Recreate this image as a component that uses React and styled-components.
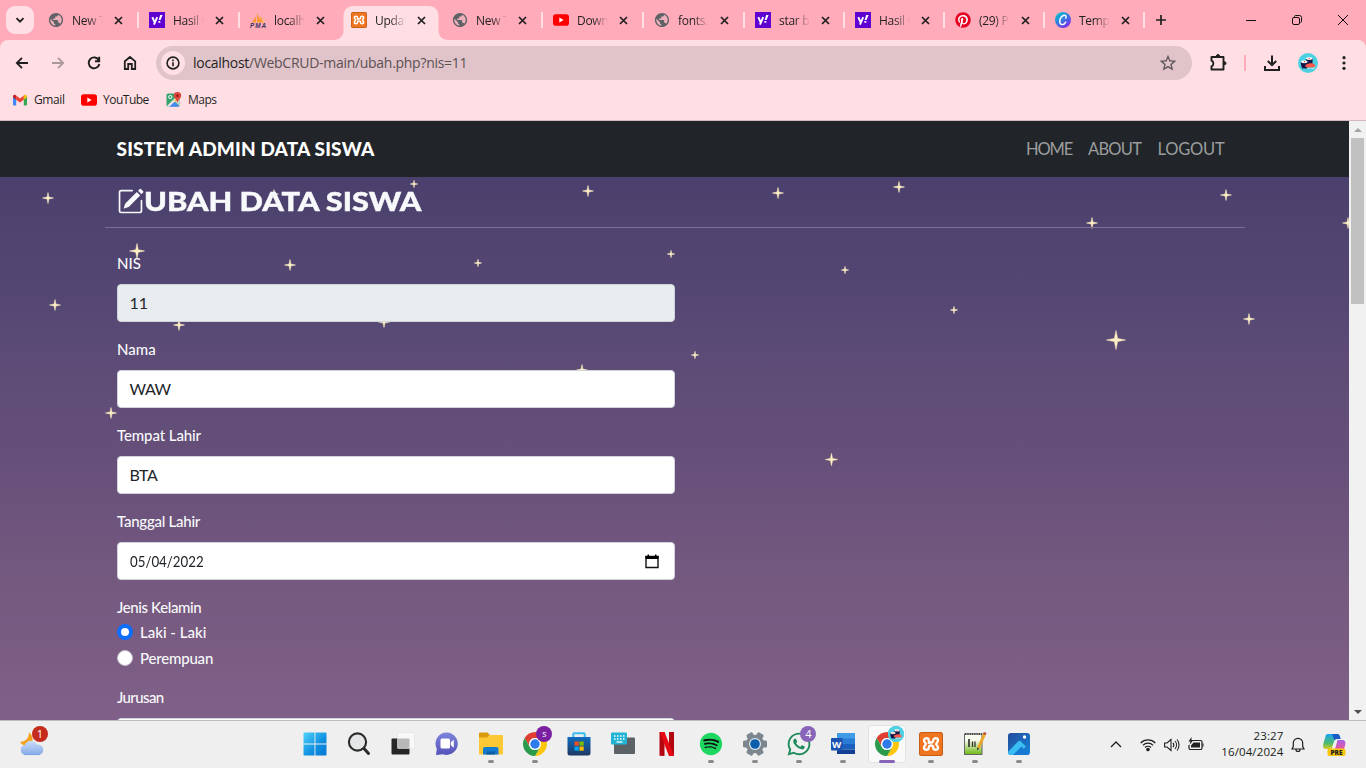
import React from "react";
import styled, { createGlobalStyle } from "styled-components";
import { BsPencilSquare } from "react-icons/bs";
import { MdPublic, MdStarBorder } from "react-icons/md";
import { FaPinterest, FaSpotify, FaWhatsapp } from "react-icons/fa";

const Global = createGlobalStyle`
  * { box-sizing: border-box; }
  body { margin: 0; overflow: hidden; }
  svg { display: block; flex: none; overflow: visible; }
`;

const Screen = styled.div`
  width: 1366px;
  height: 768px;
  display: flex;
  flex-direction: column;
  overflow: hidden;
  background: #ffabba;
  font-family: "Open Sans", "Noto Sans", sans-serif;
  color: #1f1f1f;
`;

/* ---------- tab strip ---------- */
const TabStrip = styled.div`
  height: 40px;
  flex: none;
  display: flex;
  align-items: stretch;
  padding-left: 6px;
`;
const TabSearch = styled.div`
  width: 28px;
  height: 28px;
  margin: 6px 4px 0 0;
  border-radius: 9px;
  background: #ffdfe4;
  display: grid;
  place-items: center;
`;
const TabBox = styled.div`
  width: ${(p) => p.$w}px;
  flex: none;
  padding: 0 0 0 10px;
  display: flex;
  align-items: center;
  position: relative;
`;
const TabShape = styled.svg`
  position: absolute;
  left: -5px;
  top: 6px;
`;
const Fav = styled.div`
  width: 16px;
  height: 16px;
  position: relative;
`;
const TabTitle = styled.div`
  width: 31px;
  margin-left: 8px;
  padding-top: 1px;
  white-space: nowrap;
  font-size: 12px;
  line-height: 16px;
  letter-spacing: ${(p) => p.$ls || -0.3}px;
  position: relative;
  mask-image: linear-gradient(90deg, #000 50%, transparent);
`;
const TabClose = styled.div`
  position: relative;
  margin-left: 11px;
`;
const Divider = styled.div`
  width: 2px;
  height: 16px;
  margin-left: auto;
  background: ${(p) => (p.$hidden ? "transparent" : "#ffdfe4")};
`;
const NewTab = styled.div`
  width: 32px;
  display: grid;
  place-items: center;
`;
const WindowButtons = styled.div`
  margin-left: auto;
  display: flex;
  > div {
    width: 46px;
    display: grid;
    place-items: center;
  }
`;

/* ---------- toolbar ---------- */
const Chrome = styled.div`
  height: 81px;
  flex: none;
  background: #ffdfe4;
  border-radius: 8px 8px 0 0;
  border-bottom: 1px solid #d3b8bd;
`;
const Toolbar = styled.div`
  height: 46px;
  display: flex;
  align-items: center;
  padding-left: 4px;
`;
const ToolButton = styled.div`
  width: 36px;
  height: 36px;
  display: grid;
  place-items: center;
`;
const AddressBar = styled.div`
  width: 1036px;
  height: 34px;
  margin: 0 8px;
  padding: 0 14px 0 5px;
  border-radius: 17px;
  background: #e0c4c9;
  display: flex;
  align-items: center;
`;
const InfoChip = styled.div`
  width: 24px;
  height: 24px;
  border-radius: 50%;
  background: #ffdfe4;
  display: grid;
  place-items: center;
`;
const Url = styled.div`
  margin-left: 8px;
  padding-bottom: 1px;
  flex: 1;
  font-size: 14px;
  letter-spacing: -0.29px;
  color: #5c5154;
  span { color: #1f1f1f; }
`;
const ToolDivider = styled.div`
  width: 2px;
  height: 16px;
  margin: 0 8px;
  background: #ffabba;
`;
const Bookmarks = styled.div`
  display: flex;
  align-items: center;
  height: 27px;
  padding-left: 12px;
`;
const Bookmark = styled.div`
  display: flex;
  align-items: center;
  gap: 6px;
  width: ${(p) => p.$w}px;
  font-size: 12px;
  letter-spacing: ${(p) => p.$ls || 0}px;
`;

/* ---------- web page ---------- */
const Viewport = styled.div`
  height: 599px;
  flex: none;
  display: flex;
  overflow: hidden;
`;
const Page = styled.div`
  width: 1349px;
  height: 599px;
  display: flex;
  flex-direction: column;
  font-family: Lato, "Gill Sans MT", sans-serif;
`;
const Navbar = styled.div`
  height: 56px;
  flex: none;
  background: #212529;
  padding: 0 124px 2px 116.5px;
  display: flex;
  justify-content: space-between;
  align-items: center;
`;
const Brand = styled.div`
  font-family: Lato, sans-serif;
  font-weight: 900;
  font-size: 19px;
  color: #fff;
  white-space: nowrap;
  letter-spacing: 0.16px;
`;
const NavLinks = styled.div`
  display: flex;
  gap: 16px;
  padding-top: 2px;
`;
const NavLink = styled.div`
  width: ${(p) => p.$w}px;
  white-space: nowrap;
  font-size: 16.5px;
  letter-spacing: ${(p) => p.$ls}px;
  color: #9b9d9e;
`;
const Night = styled.div`
  flex: 1;
  position: relative;
  overflow: hidden;
  background: linear-gradient(#4b406d 0%, #584975 29%, #5c4b76 32%, #67507a 54%, #75597f 75%, #806088 100%);
`;
const Sky = styled.svg`
  position: absolute;
  left: 0;
  top: 0;
`;
const Container = styled.div`
  position: relative;
  width: 1140px;
  margin-left: 105px;
`;
const Heading = styled.h3`
  margin: 0;
  height: 50px;
  padding: 0 0 2px 12px;
  display: flex;
  align-items: center;
  color: #f8f9fa;
  font-size: 27px;
  font-weight: 900;
  white-space: nowrap;
`;
const HeadingText = styled.span`
  padding-bottom: 1px;
  transform: scaleX(1.14);
  transform-origin: left;
  letter-spacing: -0.03px;
  -webkit-text-stroke: 0.4px #f8f9fa;
`;
const Rule = styled.div`
  height: 1px;
  background: #7b6f93;
  margin-bottom: 24px;
`;
const Form = styled.div`
  width: 570px;
  padding-left: 12px;
`;
const Group = styled.div`
  margin-bottom: 16px;
`;
const Label = styled.div`
  height: 24px;
  line-height: 23px;
  font-size: 15px;
  font-weight: 500;
  color: #f8f9fa;
  margin-bottom: ${(p) => (p.$tight ? 0 : 8)}px;
  letter-spacing: ${(p) => p.$ls || 0}px;
  white-space: nowrap;
`;
const Control = styled.div`
  height: 38px;
  padding: 0 15px 0 11.5px;
  border: 1px solid #ced4da;
  border-radius: 4px;
  background: ${(p) => (p.$readonly ? "#e9ecef" : "#fff")};
  color: #212529;
  font-size: 16px;
  display: flex;
  align-items: center;
  justify-content: space-between;
  letter-spacing: ${(p) => p.$ls || 0}px;
  span { padding-bottom: 2px; }
`;
const DateText = styled.span`
  transform: scaleX(0.83);
  transform-origin: left;
`;
const Check = styled.div`
  height: 24px;
  margin-bottom: 2px;
  display: flex;
  align-items: center;
  gap: 7px;
  color: #f8f9fa;
  font-size: 15px;
  font-weight: 500;
  letter-spacing: ${(p) => p.$ls || 0}px;
  span { padding-bottom: 1px; }
`;
const Radio = styled.div`
  width: 16px;
  height: 16px;
  border-radius: 50%;
  background: #fff;
  border: ${(p) => (p.$on ? "4.5px solid #0d6efd" : "1px solid #c3bec9")};
`;
const Scrollbar = styled.div`
  width: 17px;
  background: #f1f1f1;
  display: flex;
  flex-direction: column;
  align-items: center;
  justify-content: space-between;
`;
const ScrollTop = styled.div`
  display: flex;
  flex-direction: column;
  align-items: center;
`;
const Arrow = styled.div`
  width: 17px;
  height: 17px;
  display: grid;
  place-items: center;
`;
const Thumb = styled.div`
  width: 13px;
  height: 166px;
  background: #c1c1c1;
`;

/* ---------- taskbar ---------- */
const Taskbar = styled.div`
  height: 48px;
  flex: none;
  background: #eeefee;
  border-top: 1px solid #bdbdbd;
  display: flex;
  align-items: center;
`;
const Weather = styled.div`
  width: 293.4px;
  padding: 0 0 1px 19px;
`;
const TaskItem = styled.div`
  width: 44px;
  height: 47px;
  display: flex;
  flex-direction: column;
  align-items: center;
  padding-top: 11px;
  position: relative;
`;
const ActiveTile = styled.div`
  position: absolute;
  left: 3px;
  top: 4px;
  width: 38px;
  height: 38px;
  border-radius: 4px;
  background: #f9f9f9;
  border: 1px solid #e3e3e3;
`;
const TaskIcon = styled.div`
  position: relative;
  width: 24px;
  height: 24px;
  display: grid;
  place-content: center;
`;
const Indicator = styled.div`
  position: relative;
  margin-top: 4px;
  width: ${(p) => (p.$active ? 16 : 6)}px;
  height: 3px;
  border-radius: 2px;
  background: ${(p) => (p.$active ? "#8764b8" : "#8b8b8b")};
`;
const Badge = styled.div`
  position: absolute;
  right: -5px;
  top: -6px;
  width: 16px;
  height: 16px;
  border-radius: 50%;
  background: ${(p) => p.$bg};
  color: #fff;
  font-size: ${(p) => p.$fs || 11}px;
  line-height: 16px;
  text-align: center;
`;
const Tray = styled.div`
  margin-left: auto;
  padding-right: 10.5px;
  display: flex;
  align-items: center;
  height: 47px;
`;
const TraySlot = styled.div`
  width: ${(p) => p.$w}px;
  display: grid;
  place-items: center;
`;
const Clock = styled.div`
  width: 72px;
  text-align: right;
  font-size: 11.5px;
  line-height: 16px;
  letter-spacing: 0.12px;
  padding-bottom: 2px;
  white-space: nowrap;
  color: #1b1b1b;
`;

/* ---------- icons ---------- */
const Stroke = ({ d, s = 16, w = 1.8, c = "#1f1f1f", children }) => (
  <svg width={s} height={s} viewBox={`0 0 ${s} ${s}`} fill="none" stroke={c} strokeWidth={w}>
    {d && <path d={d} />}
    {children}
  </svg>
);

const Globe = () => (
  <svg width="16" height="16" viewBox="0 0 16 16">
    <circle cx="8" cy="8" r="5.5" fill="#eeb0bb" />
    <MdPublic x="-0.5" y="-0.5" size={17} color="#5f6368" />
  </svg>
);
const Yahoo = () => (
  <svg width="16" height="16" viewBox="0 0 16 16">
    <rect width="16" height="16" fill="#5f01d1" />
    <path d="M3.3 5.2L5.5 10M8.2 5.2L5 12.6" stroke="#fff" strokeWidth="1.9" fill="none" />
    <path d="M11.2 3h2.4l-2 5h-2zM9.4 9h1.9v1.7H9.4z" fill="#fff" />
  </svg>
);
const Pma = () => (
  <svg width="16" height="16" viewBox="0 0 16 16">
    <path d="M1.500 10.500L6 4.500v6zM7 10.500V1l3.500 7V4l4.500 6.500z" fill="#f99b35" />
    <path d="M11 5l4 5.500h-2z" fill="#fbc58c" />
    <text x="0" y="15.500" fontFamily="Liberation Sans" fontWeight="700" fontStyle="italic" fontSize="6.300" fill="#343660" textLength="16">PMA</text>
  </svg>
);
const Xampp = ({ s = 16 }) => (
  <svg width={s} height={s} viewBox="0 0 24 24">
    <rect width="24" height="24" rx="2.500" fill="#c65c15" />
    <rect x="1" y="1" width="22" height="22" rx="2" fill="#ef7521" />
    <path
      d="M9.800 12V8.500C9.800 5.500 5 5.500 5 8.500C5 10.300 6.800 10.600 6.800 12C6.800 13.400 5 13.700 5 15.500C5 18.500 9.800 18.500 9.800 15.500C9.800 14.300 10.500 13.500 12 13.500C13.500 13.500 14.200 14.300 14.200 15.500C14.200 18.500 19 18.500 19 15.500C19 13.700 17.200 13.400 17.200 12C17.200 10.600 19 10.300 19 8.500C19 5.500 14.200 5.500 14.200 8.500C14.200 9.700 13.500 10.500 12 10.500C10.500 10.500 9.800 9.700 9.800 8.500"
      fill="none" stroke="#fff" strokeWidth="2.300" strokeLinejoin="round"
    />
  </svg>
);
const YouTube = () => (
  <svg width="16" height="16" viewBox="0 0 16 16">
    <rect y="2.300" width="16" height="11.400" rx="2.800" fill="#f00" />
    <path d="M6.300 5.600v4.800L10.600 8z" fill="#fff" />
  </svg>
);
const Pinterest = () => (
  <svg width="16" height="16" viewBox="0 0 16 16">
    <circle cx="8" cy="8" r="7" fill="#fff" />
    <FaPinterest size={16} color="#e60023" />
  </svg>
);
const Canva = () => (
  <svg width="16" height="16" viewBox="0 0 16 16">
    <defs>
      <linearGradient id="canva" x1="0" y1="0" x2="0.7" y2="1">
        <stop offset="0.1" stopColor="#00c4cc" />
        <stop offset="0.6" stopColor="#3f6fe0" />
        <stop offset="1" stopColor="#7d2ae8" />
      </linearGradient>
    </defs>
    <circle cx="8" cy="8" r="8" fill="url(#canva)" />
    <path d="M10.800 6.200c.6-1.200.3-2.900-1.300-2.900C7 3.300 4.700 6.400 4.700 9.300c0 2 1 3.300 2.600 3.300 1.600 0 2.800-1.100 3.500-2.400" fill="none" stroke="#fff" strokeWidth="1.400" strokeLinecap="round" />
  </svg>
);
const Gmail = () => (
  <svg width="16" height="16" viewBox="0 0 16 16">
    <path d="M1 4.500l3.200 2.400v6.600H2a1 1 0 0 1-1-1z" fill="#4285f4" />
    <path d="M15 4.500l-3.200 2.400v6.600H14a1 1 0 0 0 1-1z" fill="#34a853" />
    <path d="M4.200 3.600L8 6.500l3.800-2.900v4.100L8 10.500 4.200 7.700z" fill="#ea4335" />
    <path d="M1 4.600c0-1.700 1.700-2.200 2.700-1.400l.5.4v4.100L1 5.300z" fill="#c5221f" />
    <path d="M15 4.600c0-1.700-1.700-2.200-2.700-1.400l-.5.4v4.100L15 5.300z" fill="#fbbc04" />
  </svg>
);
const Maps = () => (
  <svg width="16" height="16" viewBox="0 0 16 16">
    <rect x="0.500" y="1.500" width="13" height="13" rx="1.500" fill="#34a26b" />
    <path d="M2 14.500l5.500-5.500 6 5.500z" fill="#4a89f3" />
    <path d="M1 14L9 6l3 1-7.500 7.500H1.500z" fill="#f2e9e2" />
    <path d="M3.500 14.500L8 10l4.500 4.500z" fill="#4a89f3" />
    <path d="M9 9.500l4.500 4.500V8l-1.500-1z" fill="#cdd4d8" />
    <path d="M7.500 9.500l2-2.300L11 9z" fill="#fbc02d" />
    <circle cx="4.300" cy="5" r="1.600" fill="none" stroke="#fff" strokeWidth="1" />
    <path d="M11.500 0a3.700 3.700 0 0 1 3.700 3.700c0 2.500-2.700 3.300-3.700 7-1-3.700-3.700-4.500-3.700-7A3.700 3.700 0 0 1 11.500 0z" fill="#e2453a" />
    <circle cx="11.500" cy="3.700" r="1.300" fill="#8d1c18" />
  </svg>
);
const Sushi = ({ s = 20 }) => (
  <svg width={s} height={s} viewBox="0 0 20 20">
    <circle cx="10" cy="10" r="10" fill="#4dd0e1" />
    <path d="M8 5.500h6.500v6H8zM2.800 8.500h7v7H4.500c-1.200-1-1.700-4-1.700-7z" fill="#171747" />
    <ellipse cx="11.200" cy="5.600" rx="3.200" ry="1.400" fill="#fff" />
    <ellipse cx="6.300" cy="8.800" rx="3.300" ry="1.400" fill="#fff" />
    <circle cx="11.300" cy="5.600" r=".7" fill="#f44336" />
    <circle cx="6.500" cy="8.800" r=".7" fill="#f44336" />
    <path d="M8.200 14.600c3.500.8 7 .9 8.800-.6l-1 1.500H9z" fill="#fff" />
    <path d="M7 13c1.500-3.300 7.700-3.500 9.700-1.400.8 1.200.5 2.200-.4 2.500-2.500.8-7.700.5-9.300-1.100z" fill="#ff5a4a" />
  </svg>
);
const ChromeLogo = () => (
  <svg width="24" height="24" viewBox="0 0 24 24">
    <path d="M1.610 6A12 12 0 0 1 22.390 6H12A6 6 0 0 0 6.800 15Z" fill="#df3e32" />
    <path d="M22.390 6A12 12 0 0 1 12 24L17.200 15A6 6 0 0 0 12 6Z" fill="#fdc60b" />
    <path d="M12 24A12 12 0 0 1 1.610 6L6.800 15A6 6 0 0 0 17.200 15Z" fill="#299b4b" />
    <circle cx="12" cy="12" r="6" fill="#fff" />
    <circle cx="12" cy="12" r="4.700" fill="#2f7bea" />
  </svg>
);
const WeatherIcon = () => (
  <svg width="26" height="27" viewBox="0 2 26 27">
    <defs>
      <linearGradient id="cloud" x1="0" y1="0" x2="0" y2="1">
        <stop offset="0" stopColor="#c9ddf8" />
        <stop offset="1" stopColor="#85a9e8" />
      </linearGradient>
    </defs>
    <path d="M11 3.500c4 2.500 5 8.500 1.500 12-3 2-8 1.500-10.500-2.500 5 0 9-3.500 9-9.500z" fill="#f5a11c" />
    <path d="M7.500 26a5 5 0 0 1-.7-9.900 6.500 6.500 0 0 1 12-.6A5.300 5.300 0 0 1 21 26z" fill="url(#cloud)" />
    <path d="M6 25.600h16" stroke="#7d9fe2" strokeWidth="0.800" />
  </svg>
);
const Start = () => (
  <svg width="24" height="24" viewBox="0 0 24 24">
    <defs>
      <linearGradient id="win" x1="0" y1="0" x2="1" y2="1">
        <stop offset="0" stopColor="#50d2fa" />
        <stop offset="0.600" stopColor="#0f8fe0" />
        <stop offset="1" stopColor="#0876d2" />
      </linearGradient>
    </defs>
    <path d="M0.500 1.500a1 1 0 0 1 1-1H11.500V11.600H.5zM12.400.5H22.500a1 1 0 0 1 1 1V11.600H12.400zM.5 12.500H11.500V23.500H1.500a1 1 0 0 1-1-1zM12.400 12.500H23.500V22.500a1 1 0 0 1-1 1H12.400z" fill="url(#win)" />
  </svg>
);
const Search = () => (
  <svg width="24" height="24" viewBox="0 0 24 24" fill="none" stroke="#2b2b2b">
    <circle cx="10.500" cy="10" r="8.600" strokeWidth="2.100" fill="#e4e6e8" />
    <path d="M17 16.500l4.500 5" strokeWidth="3" strokeLinecap="round" />
  </svg>
);
const TaskView = () => (
  <svg width="24" height="24" viewBox="0 0 24 24">
    <rect x="0.500" y="6.500" width="18" height="16" rx="1" fill="#262626" />
    <rect x="6.500" y="0.500" width="17" height="16" rx="1" fill="#f8f8f8" stroke="#ddd" strokeWidth=".5" />
    <rect x="6.500" y="6.500" width="12" height="10" fill="#b9b9b9" />
  </svg>
);
const Chat = () => (
  <svg width="24" height="24" viewBox="0 0 24 24">
    <defs>
      <linearGradient id="chat" x1="0" y1="0" x2="0" y2="1">
        <stop offset="0" stopColor="#7d85dc" />
        <stop offset="1" stopColor="#5651b8" />
      </linearGradient>
    </defs>
    <path d="M12 .5a11.200 11.200 0 1 1-4 21.800L1 23l.8-6A11.200 11.200 0 0 1 12 .5z" fill="url(#chat)" />
    <rect x="5.500" y="6.500" width="9.500" height="10" rx="1.500" fill="#fff" />
    <path d="M15.800 10.300l3-2.500v8l-3-2.500z" fill="#fff" />
  </svg>
);
const Explorer = () => (
  <svg width="24" height="24" viewBox="0 0 24 24">
    <path d="M0 1.500a1 1 0 0 1 1-1h7.500l2.500 2.500-2 3H0z" fill="#d99a0b" />
    <path d="M0 5.500h8l2.500-2.500H23a1 1 0 0 1 1 1v18.500H0z" fill="#fcc934" />
    <path d="M4 17a2 2 0 0 1 2-2h11.500a2 2 0 0 1 2 2v5.500H4z" fill="#137bd0" />
    <path d="M7.500 19.500h8.500v3H7.500z" fill="#0c5ca8" />
  </svg>
);
const Store = () => (
  <svg width="24" height="24" viewBox="0 0 24 24">
    <defs>
      <linearGradient id="store" x1="0" y1="0" x2="0" y2="1">
        <stop offset="0" stopColor="#0f6cbd" />
        <stop offset="1" stopColor="#1f3963" />
      </linearGradient>
    </defs>
    <path d="M6.300 6V2.300a1 1 0 0 1 1-1h9.400a1 1 0 0 1 1 1V6" fill="none" stroke="#38bdf0" strokeWidth="2" />
    <path d="M.5 5h23V21a2.500 2.500 0 0 1-2.500 2.500H3A2.500 2.500 0 0 1 .5 21z" fill="url(#store)" />
    <path d="M7.500 9.500h4.200v4.200H7.500z" fill="#f25022" />
    <path d="M12.500 9.500h4.200v4.200h-4.200z" fill="#7fba00" />
    <path d="M7.500 14.500h4.200v4.200H7.500z" fill="#00a4ef" />
    <path d="M12.500 14.500h4.200v4.200h-4.200z" fill="#ffb900" />
  </svg>
);
const Keyboard = () => (
  <svg width="24" height="24" viewBox="0 0 24 24">
    <rect x="3" y="5.500" width="21" height="16.500" rx="1" fill="#5c6166" />
    <rect x="0" y="0.500" width="16" height="12" rx="1" fill="#22b4d4" />
    <path d="M3 4h11M3 7h11" stroke="#fff" strokeWidth="1.300" strokeDasharray="1.500 1.500" />
    <path d="M5.500 10h6" stroke="#fff" strokeWidth="1.300" />
  </svg>
);
const Netflix = () => (
  <svg width="24" height="24" viewBox="0 0 24 24">
    <path d="M4.500 0h5v24l-5-.3zM14 0h5v23.700l-5 .3z" fill="#b20710" />
    <path d="M4.500 0h5l9.500 23.700-5 .3z" fill="#e50914" />
  </svg>
);
const Spotify = () => (
  <svg width="24" height="24" viewBox="0 0 24 24">
    <circle cx="12" cy="12" r="10" fill="#111" />
    <FaSpotify x="0.500" y="0.500" size={23} color="#1ed760" />
  </svg>
);
const Settings = () => (
  <svg width="24" height="24" viewBox="0 0 24 24">
    {[0, 60, 120].map((a) => (
      <rect key={a} x="8.500" y="0" width="7" height="24" rx="1.500" fill="#7c868f" transform={`rotate(${a + 30} 12 12)`} />
    ))}
    <circle cx="12" cy="12" r="9.200" fill="#7c868f" />
    <circle cx="12" cy="12" r="6" fill="#e2e9ef" />
    <circle cx="12" cy="12" r="4.800" fill="#0d5eaa" />
  </svg>
);
const Word = () => (
  <svg width="24" height="24" viewBox="0 0 24 24">
    <path d="M6 1h18v6H6z" fill="#3f9be8" />
    <path d="M6 6.500h18v6H6z" fill="#2a7bd3" />
    <path d="M6 12h18v5.500H6z" fill="#1b5fbe" />
    <path d="M6 17.500h18V22H6z" fill="#123f94" />
    <rect x="0" y="6" width="11.500" height="12.500" rx="1" fill="#1a52b0" />
    <text x="5.700" y="15.800" textAnchor="middle" fontFamily="Open Sans" fontWeight="700" fontSize="9.500" fill="#fff">W</text>
  </svg>
);
const NotepadPP = () => (
  <svg width="24" height="24" viewBox="0 0 24 24">
    <defs>
      <linearGradient id="npp" x1="0" y1="0" x2="0" y2="1">
        <stop offset="0.300" stopColor="#f7faef" />
        <stop offset="1" stopColor="#6db813" />
      </linearGradient>
    </defs>
    <rect x="1.500" y="2" width="17.500" height="20.500" fill="url(#npp)" stroke="#666" strokeWidth="1" />
    <path d="M2 2h17" stroke="#444" strokeWidth="2" strokeDasharray="1.300 1" />
    <path d="M6 7v8" stroke="#333" strokeWidth="1.700" />
    <path d="M9.500 15V9.500M12 15V9.500" stroke="#333" strokeWidth="1.300" />
    <path d="M21.500 2l-6 14" stroke="#eda728" strokeWidth="3" />
    <path d="M22.200.5l-.9 2" stroke="#b94a34" strokeWidth="3" />
    <path d="M14.200 15.500l-.3 3 2.300-2z" fill="#333" />
  </svg>
);
const Photos = () => (
  <svg width="24" height="24" viewBox="0 0 24 24">
    <defs>
      <linearGradient id="photo" x1="0" y1="0" x2="1" y2="1">
        <stop offset="0" stopColor="#224a9a" />
        <stop offset="1" stopColor="#1786da" />
      </linearGradient>
      <clipPath id="photoClip"><rect x="1" y="1" width="22" height="22" rx="3" /></clipPath>
    </defs>
    <g clipPath="url(#photoClip)">
      <rect x="1" y="1" width="22" height="22" fill="url(#photo)" />
      <path d="M1 20L11 9.500a2 2 0 0 1 3 0L19 14.500L10 24H1z" fill="#39bdf2" />
      <path d="M5 24l9.500-9.500L24 24z" fill="#1679d2" />
    </g>
    <circle cx="17.500" cy="5" r="1.700" fill="#fff" />
  </svg>
);
const Copilot = () => (
  <svg width="24" height="24" viewBox="0 0 24 24">
    <defs>
      <linearGradient id="cpa" x1="0" y1="0" x2="0" y2="1">
        <stop offset="0" stopColor="#1ba4f5" />
        <stop offset="0.600" stopColor="#48b96d" />
        <stop offset="1" stopColor="#dccb20" />
      </linearGradient>
      <linearGradient id="cpb" x1="0" y1="0" x2="0" y2="1">
        <stop offset="0" stopColor="#a660e8" />
        <stop offset="1" stopColor="#ef5794" />
      </linearGradient>
    </defs>
    <path d="M5.500 1H15c2 0 2.500 1 3 3l.6 2H15c-2 0-2.500 1-3 2.500L9.500 16H4.500C1.500 16 .5 14 1.300 11l2-7c.5-2 1-3 2.200-3z" fill="url(#cpa)" />
    <path d="M10 1h5c2 0 2.500 1 3 3l.6 2H15c-1.500 0-2 .5-2.500 1.500z" fill="#175cc5" />
    <path d="M15.500 7H20c3 0 4 2 3.200 5l-1.500 5H11c1.500 0 2-1 2.500-2.500L15 9z" fill="url(#cpb)" />
    <rect x="5.500" y="15.500" width="18" height="7.500" rx="2" fill="#fbc70d" />
    <text x="14.500" y="21.500" textAnchor="middle" fontFamily="Open Sans" fontWeight="800" fontSize="6.500" fill="#222">PRE</text>
  </svg>
);

const tabs = [
  ["New T", <Globe />],
  ["Hasil G", <Yahoo />],
  ["localh", <Pma />],
  ["Updat", <Xampp />, true],
  ["New T", <Globe />],
  ["Down", <YouTube />],
  ["fonts.", <Globe />],
  ["star b", <Yahoo />],
  ["Hasil G", <Yahoo />],
  ["(29) P", <Pinterest />],
  ["Temp", <Canva />],
];

const stars = [
  [48, 198, 5.5], [274, 194, 4.5], [414, 184, 3.7], [588, 191, 5.5], [778, 193, 5.5], [899, 187, 5.5],
  [1226, 195, 5.5], [1092, 223, 5.5], [1348, 223, 5.5], [137, 251, 7.5], [290, 265, 5.5],
  [478, 263, 3.7], [671, 254, 3.7], [845, 270, 3.7], [954, 310, 3.7], [55, 305, 5.5],
  [179, 325, 5.5], [384, 322, 5.5], [1249, 319, 5.5], [1116, 340, 9.5], [695, 355, 3.7],
  [582, 370, 5.5], [111, 413, 5.5], [831.5, 459.5, 6.2],
];
const starPath = (x, y, r) => {
  const k = r * 0.17;
  return `M${x} ${y - r}L${x + k} ${y - k}L${x + r} ${y}L${x + k} ${y + k}L${x} ${y + r}L${x - k} ${y + k}L${x - r} ${y}L${x - k} ${y - k}Z`;
};

const tasks = [
  { icon: <Start /> },
  { icon: <Search /> },
  { icon: <TaskView /> },
  { icon: <Chat /> },
  { icon: <Explorer />, run: true },
  { icon: <ChromeLogo />, run: true, badge: <Badge $bg="#7a1fa2" $fs={9}>s</Badge> },
  { icon: <Store /> },
  { icon: <Keyboard /> },
  { icon: <Netflix /> },
  { icon: <Spotify />, run: true },
  { icon: <Settings />, run: true },
  { icon: <FaWhatsapp size={26} color="#1f8a5b" />, run: true, badge: <Badge $bg="#8764b8">4</Badge> },
  { icon: <Word />, run: true },
  { icon: <ChromeLogo />, run: true, active: true, badge: <Badge $bg="#4dd0e1"><Sushi s={16} /></Badge> },
  { icon: <Xampp s={24} />, run: true },
  { icon: <NotepadPP />, run: true },
  { icon: <Photos />, run: true },
];

export default function App() {
  return (
    <Screen>
      <Global />
      <TabStrip>
        <TabSearch><Stroke s={10} w={1.8} d="M1.500 3.200L5 6.700L8.500 3.200" /></TabSearch>
        {tabs.map(([title, icon, active], i) => (
          <TabBox key={i} $w={i < 7 ? 101 : 100}>
            {active && (
              <TabShape width="111" height="34" viewBox="0 0 111 34">
                <path d="M-2.500 34c6 0 10-4 10-9V10c0-6 4-10 10-10h75c6 0 10 4 10 10v15c0 5 4 9 10 9z" fill="#ffdfe4" />
              </TabShape>
            )}
            <Fav>{icon}</Fav>
            <TabTitle>{title}</TabTitle>
            <TabClose><Stroke s={9} w={1.7} d="M1 1L8 8M8 1L1 8" /></TabClose>
            <Divider $hidden={i === 2 || i === 3} />
          </TabBox>
        ))}
        <NewTab><Stroke s={12} w={1.7} d="M6 1V11M1 6H11" /></NewTab>
        <WindowButtons>
          <div><Stroke s={10} w={1} c="#111" d="M0 5.500H10" /></div>
          <div>
            <Stroke s={10} w={1} c="#111">
              <rect x="0.500" y="2.500" width="7" height="7" rx="1.500" />
              <path d="M2.500 2V1.500a1 1 0 0 1 1-1H7.500a2 2 0 0 1 2 2V6.500a1 1 0 0 1-1 1" />
            </Stroke>
          </div>
          <div><Stroke s={10} w={1} c="#111" d="M0 0L10 10M10 0L0 10" /></div>
        </WindowButtons>
      </TabStrip>

      <Chrome>
        <Toolbar>
          <ToolButton><Stroke s={14} w={1.8} d="M13 7H2M7 1.800L1.800 7L7 12.200" /></ToolButton>
          <ToolButton><Stroke s={14} w={1.8} c="#ab989c" d="M1 7H12M7 1.800L12.200 7L7 12.200" /></ToolButton>
          <ToolButton>
            <Stroke s={16} w={1.9} d="M12.900 5.300A5.400 5.400 0 1 0 13.400 9M9 6.300H13.200V1.700" />
          </ToolButton>
          <ToolButton><Stroke s={16} w={1.8} d="M2.800 6.300L8 2L13.200 6.300V14H9.800V9H6.200V14H2.800Z" /></ToolButton>
          <AddressBar>
            <InfoChip>
              <Stroke s={14} w={1.6}><circle cx="7" cy="7" r="5.900" /><path d="M7 6.300V10.200M7 3.600V5.200" /></Stroke>
            </InfoChip>
            <Url><span>localhost</span>/WebCRUD-main/ubah.php?nis=11</Url>
            <MdStarBorder size={20} color="#5f5559" />
          </AddressBar>
          <ToolButton>
            <Stroke s={18} w={1.9}>
              <path d="M2.500 3H14.500V15.500H2.500V12.300C5 11.500 5 7.500 2.500 6.700Z" strokeLinejoin="round" />
              <path d="M7.500 2a1.500 1.500 0 0 1 3 0zM15.500 7.700a1.500 1.500 0 0 1 0 3z" fill="#1f1f1f" strokeWidth="1" />
            </Stroke>
          </ToolButton>
          <ToolDivider />
          <ToolButton><Stroke s={16} w={2} d="M8 0.500V10M3.800 6L8 10.200L12.200 6M1 11V15H15V11" /></ToolButton>
          <ToolButton><Sushi /></ToolButton>
          <ToolButton>
            <svg width="4" height="16" viewBox="0 0 4 16" fill="#1f1f1f">
              <circle cx="2" cy="2.700" r="1.600" /><circle cx="2" cy="8" r="1.600" /><circle cx="2" cy="13.300" r="1.600" />
            </svg>
          </ToolButton>
        </Toolbar>
        <Bookmarks>
          <Bookmark $w={69} $ls={-0.4}><Gmail />Gmail</Bookmark>
          <Bookmark $w={85} $ls={-0.5}><YouTube />YouTube</Bookmark>
          <Bookmark $w={60} $ls={-0.5}><Maps />Maps</Bookmark>
        </Bookmarks>
      </Chrome>

      <Viewport>
        <Page>
          <Navbar>
            <Brand>SISTEM ADMIN DATA SISWA</Brand>
            <NavLinks>
              <NavLink $w={46} $ls={-1.1}>HOME</NavLink>
              <NavLink $w={53.5} $ls={-0.75}>ABOUT</NavLink>
              <NavLink $w={67.5} $ls={-0.2}>LOGOUT</NavLink>
            </NavLinks>
          </Navbar>
          <Night>
            <Sky width="1349" height="543" viewBox="0 177 1349 543">
              {stars.map(([x, y, r], i) => (
                <path key={i} d={starPath(x, y, r)} fill="#fff0c4" stroke="#fff0c4" strokeWidth="0.500" />
              ))}
            </Sky>
            <Container>
              <Heading><BsPencilSquare size={27} /><HeadingText>UBAH DATA SISWA</HeadingText></Heading>
              <Rule />
              <Form>
                <Group><Label>NIS</Label><Control $readonly><span>11</span></Control></Group>
                <Group><Label>Nama</Label><Control $ls={-0.5}><span>WAW</span></Control></Group>
                <Group><Label $ls={-0.1}>Tempat Lahir</Label><Control $ls={-0.5}><span>BTA</span></Control></Group>
                <Group>
                  <Label $ls={-0.25}>Tanggal Lahir</Label>
                  <Control>
                    <DateText>05/04/2022</DateText>
                    <svg width="14" height="15" viewBox="0 0 14 15">
                      <path d="M1 2.500H13V13.500H1Z" fill="none" stroke="#111" strokeWidth="1.400" />
                      <path d="M.5 2h13v3H.5zM2.500.5H4V3H2.500zM10 .5h1.500V3H10z" fill="#000" />
                    </svg>
                  </Control>
                </Group>
                <Group>
                  <Label $tight $ls={-0.38}>Jenis Kelamin</Label>
                  <Check><Radio $on /><span>Laki - Laki</span></Check>
                  <Check $ls={-0.2}><Radio /><span>Perempuan</span></Check>
                </Group>
                <Group><Label $ls={-0.6}>Jurusan</Label><Control /></Group>
              </Form>
            </Container>
          </Night>
        </Page>
        <Scrollbar>
          <ScrollTop>
            <Arrow><svg width="8" height="4"><path d="M0 4L4 0L8 4Z" fill="#a3a3a3" /></svg></Arrow>
            <Thumb />
          </ScrollTop>
          <Arrow><svg width="8" height="4"><path d="M0 0L4 4L8 0Z" fill="#505050" /></svg></Arrow>
        </Scrollbar>
      </Viewport>

      <Taskbar>
        <Weather>
          <TaskIcon><WeatherIcon /><Badge $bg="#c42b1c">1</Badge></TaskIcon>
        </Weather>
        {tasks.map((t, i) => (
          <TaskItem key={i}>
            {t.active && <ActiveTile />}
            <TaskIcon>{t.icon}{t.badge}</TaskIcon>
            {t.run && <Indicator $active={t.active} />}
          </TaskItem>
        ))}
        <Tray>
          <TraySlot $w={32}><Stroke s={12} w={1.3} d="M1 8L6 3L11 8" /></TraySlot>
          <TraySlot $w={32}>
            <Stroke s={16} w={1.2}>
              <path d="M.7 6a10.300 10.300 0 0 1 14.600 0M2.900 8.300a7.200 7.200 0 0 1 10.200 0M5 10.500a4.200 4.200 0 0 1 6 0" />
              <circle cx="8" cy="12.500" r="1.200" fill="#1f1f1f" />
            </Stroke>
          </TraySlot>
          <TraySlot $w={16}>
            <Stroke s={16} w={1.1} d="M.6 6H3L7 2.500V13.500L3 10H.6ZM9 5.800a3.500 3.500 0 0 1 0 4.400M11 4a6 6 0 0 1 0 8M13 2.500a8.500 8.500 0 0 1 0 11" />
          </TraySlot>
          <TraySlot $w={32}>
            <Stroke s={16} w={1.2}>
              <path d="M5 3.500H12.500A1.500 1.500 0 0 1 14 5V11A1.500 1.500 0 0 1 12.500 12.500H2.500A1.500 1.500 0 0 1 1 11V8" />
              <path d="M5.500 5.500H12V10.500H3V8.500ZM14.500 6.500V9.500H15.500V6.500Z" fill="#1f1f1f" stroke="none" />
              <path d="M3.500 0L.5 4.500H2.500L1.500 8L5.500 3H3.500Z" fill="#1f1f1f" stroke="none" />
            </Stroke>
          </TraySlot>
          <Clock>23:27<br />16/04/2024</Clock>
          <TraySlot $w={29}>
            <Stroke s={16} w={1.2} d="M2 12L3.300 9.500V6a4.700 4.700 0 0 1 9.400 0V9.500L14 12ZM6 12.500a2 2 0 0 0 4 0" />
          </TraySlot>
          <TraySlot $w={43}><Copilot /></TraySlot>
        </Tray>
      </Taskbar>
    </Screen>
  );
}
